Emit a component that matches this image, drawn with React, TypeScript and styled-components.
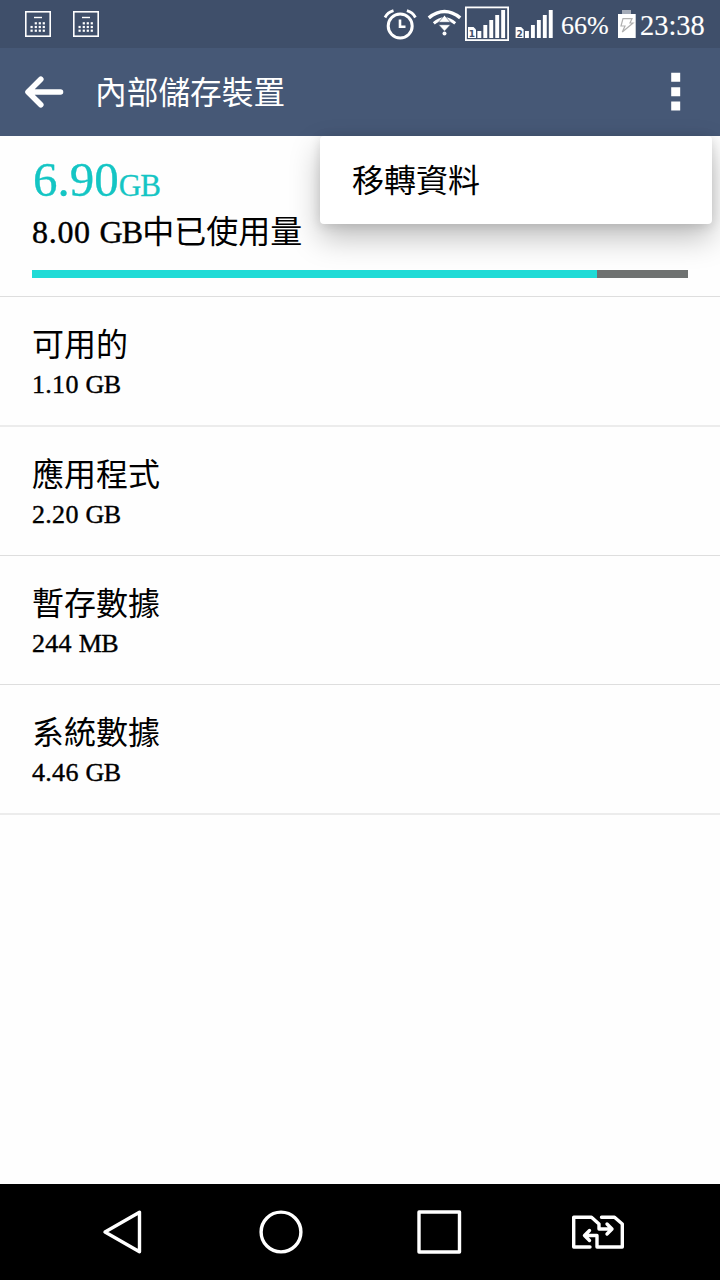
import React from 'react';
import styled, { createGlobalStyle } from 'styled-components';

const GlobalStyle = createGlobalStyle`
  * { box-sizing: border-box; }
  body { margin: 0; background: #fefefe; }
`;

const Screen = styled.div`
  position: relative;
  display: flex;
  flex-direction: column;
  width: 720px;
  height: 1280px;
  overflow: hidden;
  background: #fefefe;
  color: #000;
  font-family: 'Liberation Serif', 'Noto Sans CJK TC', serif;
`;

const StatusBar = styled.header`
  display: flex;
  align-items: center;
  justify-content: space-between;
  height: 48px;
  flex: none;
  padding: 0 14px 0 25px;
  background: #3f4f6a;
  color: #fff;
`;

const Notifications = styled.div`
  display: flex;
  gap: 22px;
`;

const StatusIcons = styled.div`
  display: flex;
  align-items: center;
  height: 48px;
`;

const StatusText = styled.span<{ $size: number; $width: number; $left: number }>`
  width: ${(p) => p.$width}px;
  margin-left: ${(p) => p.$left}px;
  font-size: ${(p) => p.$size}px;
  line-height: 48px;
  padding-top: 4px;
  white-space: nowrap;
  -webkit-text-stroke: 0.15px currentColor;
`;

const AppBar = styled.div`
  display: flex;
  align-items: center;
  height: 88px;
  flex: none;
  padding: 0 39px 0 24px;
  background: #465876;
  color: #fff;
`;

const Title = styled.h1`
  flex: 1;
  margin: 0 0 0 31px;
  font-size: 31.7px;
  font-weight: 400;
  line-height: 40px;
  padding-top: 4px;
`;

const Summary = styled.section`
  height: 161px;
  flex: none;
  padding: 19px 32px 0;
  border-bottom: 1px solid #dedede;
`;

const Used = styled.div`
  height: 50px;
  padding-left: 1px;
  color: #14c5c4;
  font-size: 49px;
  line-height: 50px;
  white-space: nowrap;
  -webkit-text-stroke: 0.3px currentColor;
`;

const UsedUnit = styled.span`
  font-size: 31px;
  letter-spacing: -0.8px;
`;

const Total = styled.div`
  height: 36px;
  margin-top: 9px;
  font-size: 32px;
  line-height: 36px;
  white-space: nowrap;
`;

const Latin = styled.span<{ $spacing: number }>`
  letter-spacing: ${(p) => p.$spacing}px;
  -webkit-text-stroke: 0.4px currentColor;
`;

const Track = styled.div`
  height: 8px;
  margin-top: 20px;
  background: #6f7271;
`;

const Fill = styled.div`
  width: 565px;
  height: 8px;
  background: #20dbd6;
`;

const Row = styled.li<{ $thick: boolean }>`
  height: ${(p) => (p.$thick ? 130 : 129)}px;
  padding: 30px 32px 0;
  border-bottom: ${(p) => (p.$thick ? '2px solid #ececec' : '1px solid #dedede')};
`;

const List = styled.ul`
  flex: 1;
  margin: 0;
  padding: 0;
  list-style: none;
`;

const RowLabel = styled.div`
  height: 36px;
  font-size: 32px;
  line-height: 36px;
`;

const RowValue = styled.div`
  height: 30px;
  margin-top: 7px;
  font-size: 26px;
  line-height: 30px;
`;

const Menu = styled.div`
  position: absolute;
  top: 136px;
  right: 8px;
  width: 392px;
  height: 88px;
  padding: 1px 0 0 32px;
  border-radius: 4px;
  background: #fff;
  box-shadow: 0 14px 30px rgba(0, 0, 0, 0.25), 0 2px 12px rgba(0, 0, 0, 0.12);
  font-size: 32px;
  line-height: 88px;
`;

const NavBar = styled.nav`
  display: grid;
  grid-template-columns: 157.5px 157.5px 154px auto;
  align-items: center;
  height: 96px;
  flex: none;
  padding-left: 101px;
  background: #000;
`;

const Glyph = styled.svg`
  display: block;
  flex: none;
`;

const DOTS = [
  [10.8, 12.3], [14.8, 12.3], [18.8, 12.3],
  [6.6, 16], [10.8, 16], [14.8, 16], [18.8, 16],
  [6.6, 19.7], [10.8, 19.7], [14.8, 19.7], [18.8, 19.7],
];

const CalendarIcon = () => (
  <Glyph width="26" height="26" viewBox="0 0 26 26" fill="none" stroke="#fff">
    <rect x="0.8" y="0.8" width="24.4" height="24.4" strokeWidth="1.6" />
    <path d="M9 6.5h8" strokeWidth="1.4" />
    {DOTS.map(([x, y]) => (
      <rect key={`${x}-${y}`} x={x - 1.1} y={y - 1.1} width="2.2" height="2.2" fill="#fff" stroke="none" />
    ))}
  </Glyph>
);

const AlarmIcon = () => (
  <Glyph width="34" height="48" viewBox="383 0 34 48" fill="none" stroke="#fff">
    <circle cx="400.2" cy="26" r="12" strokeWidth="3" />
    <path d="M400 19.5v7.3h5.5" strokeWidth="2.6" />
    <path d="M385 17.5Q387.5 12.5 393.5 10.7M415.4 17.5Q412.9 12.5 406.9 10.7" strokeWidth="2.8" />
  </Glyph>
);

const WifiIcon = () => (
  <Glyph width="48" height="48" viewBox="417 0 48 48" fill="none" stroke="#fff">
    <path d="M428.8 17.8Q444.5 5.2 460.2 17.8" strokeWidth="3.6" />
    <path d="M433.8 23.3Q444.5 14.5 455.2 23.3" strokeWidth="3" />
    <path d="M438.5 22.3l6-7 6 7zM438.5 24.7l6 6.6 6-6.6z" fill="#fff" stroke="#3f4f6a" strokeWidth="0.6" />
    <circle cx="444.5" cy="33.4" r="2" fill="#fff" stroke="none" />
  </Glyph>
);

const BARS = [7, 13, 18, 23, 28];

const SignalIcon = ({ sim, boxed }: { sim: string; boxed?: boolean }) => (
  <Glyph width={boxed ? 45 : 44} height="48" viewBox={boxed ? '465 0 45 48' : '465.4 0 44 48'}>
    {boxed && <rect x="465.9" y="7.4" width="42.2" height="32.7" fill="none" stroke="#fff" strokeWidth="1.8" />}
    <path d="M468 27h5.5l2.5 2.5V38h-8z" fill="#fff" />
    <text x="472" y="36.5" textAnchor="middle" fontFamily="DejaVu Sans" fontSize="9" fontWeight="700" fill="#3f4f6a">
      {sim}
    </text>
    {BARS.map((h, i) => (
      <rect key={h} x={477.4 + i * 5.95} y={38 - h} width="3.9" height={h} fill="#fff" />
    ))}
  </Glyph>
);

const BatteryIcon = () => (
  <Glyph width="18" height="48" viewBox="618 0 18 48">
    <path d="M622 10h9v4h-9z" fill="#a4abb8" />
    <path d="M618 14h17.7v24H618z" fill="#fff" />
    <path d="M623 18.7h9l-2 4.3h3L622.3 32l2.7-6h-4z" fill="none" stroke="#b0b0b0" strokeWidth="1.2" />
  </Glyph>
);

const rows = [
  { label: '可用的', amount: '1.10 ', unit: 'GB', thick: true },
  { label: '應用程式', amount: '2.20 ', unit: 'GB', thick: false },
  { label: '暫存數據', amount: '244 ', unit: 'MB', thick: false },
  { label: '系統數據', amount: '4.46 ', unit: 'GB', thick: true },
];

export default function App() {
  return (
    <Screen>
      <GlobalStyle />
      <StatusBar>
        <Notifications>
          <CalendarIcon />
          <CalendarIcon />
        </Notifications>
        <StatusIcons>
          <AlarmIcon />
          <WifiIcon />
          <SignalIcon sim="1" boxed />
          <Glyph width="3" height="48" />
          <SignalIcon sim="2" />
          <StatusText $size={26} $width={49} $left={4}>66%</StatusText>
          <Glyph width="8" height="48" />
          <BatteryIcon />
          <StatusText $size={28.4} $width={66} $left={4}>23:38</StatusText>
        </StatusIcons>
      </StatusBar>
      <AppBar>
        <Glyph width="40" height="36" viewBox="24 74 40 36" fill="none" stroke="#fff" strokeWidth="5.6" strokeLinecap="round" strokeLinejoin="round">
          <path d="M60.5 92H29M40.8 79.3L28 92L40.8 104.7" />
        </Glyph>
        <Title>內部儲存裝置</Title>
        <Glyph width="10" height="40" viewBox="0 0 10 40" fill="#fff">
          <path d="M0.2 0.8h9v9h-9zM0.2 15.2h9v9h-9zM0.2 29.6h9v9h-9z" />
        </Glyph>
      </AppBar>
      <Summary>
        <Used>
          6.90<UsedUnit>GB</UsedUnit>
        </Used>
        <Total>
          <Latin $spacing={0.7}>8.00 </Latin>
          <Latin $spacing={-0.8}>GB</Latin>中已使用量
        </Total>
        <Track>
          <Fill />
        </Track>
      </Summary>
      <List>
        {rows.map((row) => (
          <Row key={row.label} $thick={row.thick}>
            <RowLabel>{row.label}</RowLabel>
            <RowValue>
              <Latin $spacing={0.3}>{row.amount}</Latin>
              <Latin $spacing={-0.6}>{row.unit}</Latin>
            </RowValue>
          </Row>
        ))}
      </List>
      <NavBar>
        <Glyph width="44" height="48" viewBox="101 1208 44 48" fill="none" stroke="#fff" strokeWidth="3.4" strokeLinejoin="round">
          <path d="M105 1232l34.5-19.8v39.6z" />
        </Glyph>
        <Glyph width="44" height="48" viewBox="258.5 1208 44 48" fill="none" stroke="#fff" strokeWidth="3.4">
          <circle cx="280.5" cy="1232" r="19.9" />
        </Glyph>
        <Glyph width="46" height="48" viewBox="416 1208 46 48" fill="none" stroke="#fff" strokeWidth="3.4" strokeLinejoin="round">
          <path d="M419 1212h40.5v40H419z" />
        </Glyph>
        <Glyph width="56" height="48" viewBox="570 1208 56 48" fill="none" stroke="#fff" strokeWidth="3.4" strokeLinecap="round" strokeLinejoin="round">
          <path d="M590 1247H573.7V1217.3H591.5L599 1224V1229H611.5M607 1224L612 1229L607 1234" />
          <path d="M601.5 1217.3H614.5L622.3 1224V1247H597V1235.5H585M589.5 1230.5L584.5 1235.5L589.5 1240.5" />
        </Glyph>
      </NavBar>
      <Menu>移轉資料</Menu>
    </Screen>
  );
}
